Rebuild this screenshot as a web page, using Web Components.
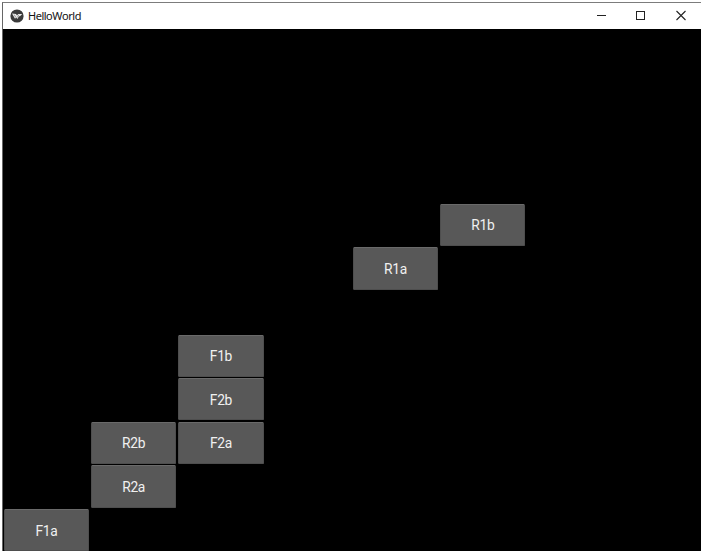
<!DOCTYPE html>
<html lang="en">
<head>
<meta charset="utf-8">
<title>HelloWorld</title>
<style>
html,body{margin:0;width:703px;height:553px;overflow:hidden;background:#fff}
body{font-family:"Open Sans","Noto Sans",sans-serif}
</style>
</head>
<body>
<app-window>
  <title-bar slot="title">HelloWorld</title-bar>
  <button-grid>
    <grid-button style="grid-area:5/6">R1b</grid-button>
    <grid-button style="grid-area:6/5">R1a</grid-button>
    <grid-button style="grid-area:8/3">F1b</grid-button>
    <grid-button style="grid-area:9/3">F2b</grid-button>
    <grid-button style="grid-area:10/2">R2b</grid-button>
    <grid-button style="grid-area:10/3">F2a</grid-button>
    <grid-button style="grid-area:11/2">R2a</grid-button>
    <grid-button style="grid-area:12/1">F1a</grid-button>
  </button-grid>
</app-window>
<script>
const define = (name, html) => customElements.define(name, class extends HTMLElement {
  constructor() {
    super();
    this.attachShadow({ mode: 'open' }).innerHTML = html;
  }
});

define('app-window', `
<style>
:host{display:flex;flex-direction:column;box-sizing:border-box;width:701px;height:551px;padding:2px 0 0 2px}
.frame{display:flex;flex-direction:column;flex:1;min-height:0;overflow:hidden;box-sizing:border-box;
  border-top:1px solid #7c7c7c;border-left:1px solid #666;background:#000}
</style>
<div class="frame"><slot name="title"></slot><slot></slot></div>`);

define('title-bar', `
<style>
:host{display:flex;flex:none;align-items:center;height:26px;background:#fff;color:#111;
  font:11px/26px "Open Sans","Noto Sans",sans-serif}
.logo{margin-left:7px;margin-right:4px;flex:none}
.name{flex:1;letter-spacing:-.43px;-webkit-text-stroke:.1px #111}
.controls{flex:none;display:block}
</style>
<svg class="logo" width="14" height="14" viewBox="0 0 14 14">
  <circle cx="7" cy="7" r="6.6" fill="#3b3b3b"/>
  <path d="M2 4.6 6 4.9 7 6.6 8.2 5 12.2 4.9 10 7.2 9 7.2 7.4 10 6.2 8.4 5 9.8Z" fill="#ececec"/>
  <path d="M4.2 5.6 5.8 8.4M8.8 5.8 7.4 8.4" stroke="#777" stroke-width=".7"/>
</svg>
<span class="name"><slot></slot></span>
<svg class="controls" width="120" height="26" viewBox="581 3 120 26" fill="none" stroke="#222">
  <path d="M597 15.5h9"/>
  <rect x="636.5" y="11.5" width="8" height="8"/>
  <path d="M676.5 11l9 9M685.5 11l-9 9" stroke-width="1.1"/>
</svg>`);

define('button-grid', `
<style>
:host{display:grid;flex:none;grid-template-columns:repeat(8,85.4px);grid-template-rows:repeat(12,42.2px);
  gap:1.45px 1.9px;padding:.2px 0 0 .7px}
</style><slot></slot>`);

define('grid-button', `
<style>
:host{display:flex;align-items:center;justify-content:center;box-sizing:border-box;border-radius:1.5px;
  background:#585858;border:1px solid #4e4e4e;border-top-color:#6a6a6a;color:#f0f0f0;
  padding-top:.7px;font:13.8px/16px Roboto,sans-serif;letter-spacing:-.3px}
</style><slot></slot>`);
</script>
</body>
</html>
